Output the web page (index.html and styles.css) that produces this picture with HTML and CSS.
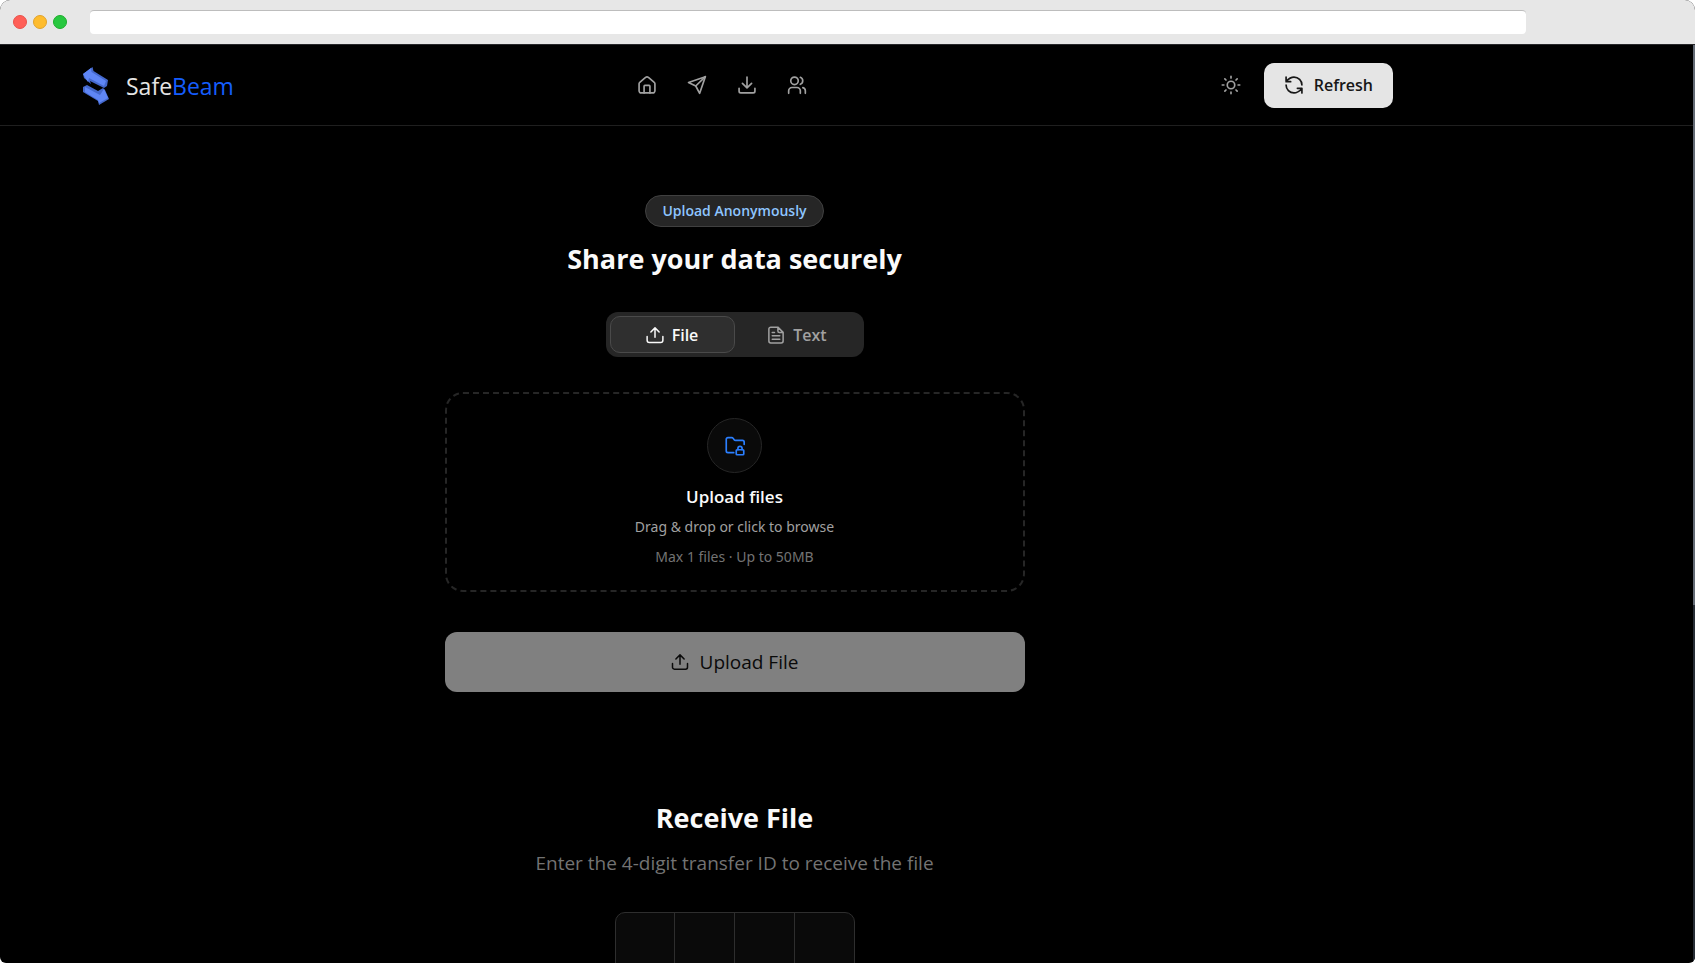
FILE: index.html
```html
<!DOCTYPE html>
<html lang="en">
<head>
<meta charset="utf-8">
<title>SafeBeam</title>
<link rel="stylesheet" href="styles.css">
</head>
<body>
<div class="window">
  <div class="chrome">
    <div class="lights"><span class="light red"></span><span class="light amber"></span><span class="light green"></span></div>
    <input class="address" type="text" aria-label="Address">
  </div>
  <div class="viewport">
    <div class="page">
      <header class="header">
        <div class="container header-row">
          <a class="brand" href="#">
            <svg class="logo" viewBox="0 0 40 46" aria-hidden="true">
              <path fill="#4468cc" d="M5 12 14.500 5 15.500 9 30 18 29 24 26 26 12 19 13 22 6 16z"/>
              <path fill="#5f86f5" d="M5 12 13 6 13.500 10 28 19 26 24 11 16 10 20z"/>
              <path fill="#4468cc" d="M5 25 9 23 20 29 25 26 27 28 31 37 21 43 20 39 5 30z"/>
              <path fill="#5f86f5" d="M7 25 22 33 26 27 30 36 21 41 20 38 7 30z"/>
            </svg>
            <span class="brand-name">Safe<span class="brand-accent">Beam</span></span>
          </a>
          <nav class="nav">
            <a href="#" aria-label="Home"><svg class="icon" viewBox="0 0 24 24"><path d="M2.500 10.500v8.500a2.500 2.500 0 0 0 2.500 2.500h14a2.500 2.500 0 0 0 2.500-2.500v-8.500a2 2 0 0 0-.8-1.600l-7-6a2.500 2.500 0 0 0-3.400 0l-7 6a2 2 0 0 0-.8 1.600z"/><path d="M8.500 21.500v-8a1 1 0 0 1 1-1h5a1 1 0 0 1 1 1v8"/></svg></a>
            <a href="#" aria-label="Send"><svg class="icon" viewBox="0 0 24 24"><path d="M22 2 1.800 9l8.700 4.200L15.200 22z"/><path d="M22 2 10.500 13.200"/></svg></a>
            <a href="#" aria-label="Receive"><svg class="icon" viewBox="0 0 24 24"><path d="M12 2.500v12.500M6.500 10l5.500 5.500 5.500-5.500M2.500 16v3.500a2 2 0 0 0 2 2h15a2 2 0 0 0 2-2V16"/></svg></a>
            <a href="#" aria-label="People"><svg class="icon" viewBox="0 0 24 24"><circle cx="9" cy="7" r="4.500"/><path d="M2 22v-3a4 4 0 0 1 4-4h6a4 4 0 0 1 4 4v3M16 2.800a4.500 4.500 0 0 1 0 8.400M22 22v-3a4 4 0 0 0-3-3.800"/></svg></a>
          </nav>
          <div class="actions">
            <button class="theme" type="button" aria-label="Toggle theme"><svg class="icon" viewBox="0 0 24 24"><circle cx="12" cy="12" r="4.500"/><path d="M12 1.500v2M12 20.500v2M1.500 12h2M20.500 12h2M4.600 4.600l1.400 1.400M18 18l1.400 1.400M4.600 19.400l1.400-1.400M18 6l1.400-1.400"/></svg></button>
            <button class="refresh" type="button"><svg class="icon" viewBox="0 0 24 24"><path d="M21.500 12A9.500 9.500 0 0 0 12 2.500c-3.500 0-6.500 2-9.500 5M2.500 2.500v5.500h5.500M2.500 12A9.500 9.500 0 0 0 12 21.500c3.500 0 6.500-2 9.500-5M16 16h5.500v5.500"/></svg>Refresh</button>
          </div>
        </div>
      </header>
      <main class="container main">
        <section class="share">
          <span class="badge">Upload Anonymously</span>
          <h1 class="title">Share your data securely</h1>
          <div class="tabs" role="tablist">
            <button class="tab active" type="button" role="tab" aria-selected="true"><svg class="icon" viewBox="0 0 24 24"><path d="M12 15V2.500M6.500 8 12 2.500 17.500 8M1.500 14v5a3 3 0 0 0 3 3h15a3 3 0 0 0 3-3v-5"/></svg>File</button>
            <button class="tab" type="button" role="tab" aria-selected="false"><svg class="icon" viewBox="0 0 24 24"><path d="M14.500 1.500H5a2.500 2.500 0 0 0-2.500 2.500v16A2.500 2.500 0 0 0 5 22.500h14a2.500 2.500 0 0 0 2.500-2.500V8.500zM14.500 1.500v5a2 2 0 0 0 2 2h5M7 8.500h3M7 13h10M7 17.500h10"/></svg>Text</button>
          </div>
          <button class="dropzone" type="button">
            <span class="drop-icon"><svg class="icon" viewBox="0 0 24 24"><path d="M10.500 20H3.500a2 2 0 0 1-2-2V4a2 2 0 0 1 2-2h4.600a2 2 0 0 1 1.600.8l1.300 1.600a2 2 0 0 0 1.600.8h8.400a2 2 0 0 1 2 2v3"/><rect x="13.500" y="16.500" width="9" height="6" rx="1"/><path d="M15.500 16.500V15a2.500 2.500 0 0 1 5 0v1.500"/></svg></span>
            <span class="drop-title">Upload files</span>
            <span class="drop-text">Drag &amp; drop or click to browse</span>
            <span class="drop-note">Max 1 files · Up to 50MB</span>
          </button>
          <button class="upload" type="button"><svg class="icon" viewBox="0 0 24 24"><path d="M12 15V2.500M6.500 8 12 2.500 17.500 8M2 14v5a2.500 2.500 0 0 0 2.500 2.500h15a2.500 2.500 0 0 0 2.500-2.500v-5"/></svg>Upload File</button>
        </section>
        <section class="receive">
          <h2 class="title">Receive File</h2>
          <p class="lead">Enter the 4-digit transfer ID to receive the file</p>
          <div class="otp">
            <input type="text" maxlength="1" aria-label="Digit 1"><input type="text" maxlength="1" aria-label="Digit 2"><input type="text" maxlength="1" aria-label="Digit 3"><input type="text" maxlength="1" aria-label="Digit 4">
          </div>
        </section>
      </main>
    </div>
    <div class="scrollbar"><div class="thumb"></div></div>
  </div>
</div>
</body>
</html>
```
FILE: styles.css
```css
* { box-sizing: border-box; }
body { margin: 0; background: #fff; font-family: "Open Sans", "Noto Sans", sans-serif; color: #fafafa; }
button, input { font: inherit; color: inherit; margin: 0; }
button { cursor: pointer; border: 0; }
a { color: inherit; text-decoration: none; }
.window { display: flex; flex-direction: column; height: 100vh; overflow: hidden; border-radius: 10px 10px 6px 6px; background: #000; }
.chrome { flex: none; display: flex; align-items: center; gap: 23px; height: 45px; padding: 0 169px 0 13px; background: #e7e7e7; border-bottom: 1px solid #27272a; }
.lights { display: flex; gap: 6px; }
.light { width: 14px; height: 14px; border-radius: 50%; border: 1px solid; }
.red { background: #ff5f57; border-color: #e9524a; }
.amber { background: #febc2e; border-color: #e1a32b; }
.green { background: #28c840; border-color: #1dad2b; }
.address { flex: 1; height: 24px; padding: 0 8px; color: #222; background: #fff; border: 0; border-top: 1px solid #bdbdbd; border-radius: 4px; }
.viewport { flex: 1; min-height: 0; display: flex; }
.page { flex: 1; overflow: hidden; }
.scrollbar { flex: none; width: 2px; background: #272d35; }
.thumb { height: 61%; background: #646b75; }
.container { max-width: 1469px; }
.icon { flex: none; width: 20px; height: 20px; fill: none; stroke: currentColor; stroke-width: 2; stroke-linecap: round; stroke-linejoin: round; }
.header { border-bottom: 1px solid #1f1f1f; }
.header-row { display: flex; justify-content: space-between; align-items: center; height: 80px; padding: 0 76px 0 78px; }
.brand { display: flex; align-items: center; gap: 8px; }
.logo { width: 40px; height: 46px; }
.brand-name { padding-top: 2px; font-size: 23px; line-height: 32px; color: #e5e5e5; }
.brand-accent { color: #155dfc; }
.nav { display: flex; gap: 30px; color: #a1a1a1; }
.nav a { display: flex; }
.actions { display: flex; align-items: center; gap: 13px; }
.theme { display: flex; padding: 10px; background: none; color: #a1a1a1; }
.refresh { display: flex; align-items: center; gap: 10px; height: 45px; padding: 0 20px; border-radius: 10px; background: #e5e5e5; color: #171717; font-size: 16px; font-weight: 600; }
.main { display: flex; flex-direction: column; gap: 108px; padding: 69px 24px 0; }
.share, .receive { display: flex; flex-direction: column; align-items: center; }
.badge { height: 32px; padding: 0 16px; border: 1px solid #404040; border-radius: 16px; background: #262626; color: #8ec5ff; font-size: 14px; font-weight: 600; line-height: 30px; }
.title { margin: 0; font-size: 27px; font-weight: 700; line-height: 36px; }
.share .title { margin-top: 14px; }
.tabs { display: flex; margin-top: 35px; padding: 4px; border-radius: 12px; background: #262626; }
.tab { display: flex; align-items: center; justify-content: center; gap: 8px; width: 125px; height: 37px; border: 1px solid transparent; border-radius: 10px; background: none; color: #a1a1a1; font-size: 16px; font-weight: 600; }
.tab.active { background: #2f2f2f; border-color: #4a4a4a; color: #fafafa; }
.tab .icon, .upload .icon { width: 18px; height: 18px; }
.dropzone { display: flex; flex-direction: column; align-items: center; justify-content: flex-start; width: 100%; max-width: 580px; height: 200px; margin-top: 35px; padding: 24px 24px 16px; border: 2px dashed #262626; border-radius: 18px; background: none; }
.drop-icon { flex: none; display: flex; align-items: center; justify-content: center; width: 55px; height: 55px; border: 1px solid #262626; border-radius: 50%; background: #0a0a0a; color: #2b7fff; }
.drop-title { margin-top: 9px; font-size: 17px; font-weight: 600; line-height: 30px; }
.drop-text, .drop-note { font-family: "Noto Sans", sans-serif; font-size: 14px; line-height: 30px; color: #a1a1a1; }
.drop-note { color: #737373; }
.upload { display: flex; align-items: center; justify-content: center; gap: 11px; width: 100%; max-width: 580px; height: 60px; margin-top: 40px; border-radius: 12px; background: #808080; color: #0a0a0a; font-size: 19px; }
.lead { margin: 13px 0 0; color: #737373; font-size: 19px; line-height: 28px; }
.otp { display: flex; margin-top: 35px; border: 1px solid #2e2e2e; border-radius: 10px; background: #0a0a0a; }
.otp input { width: 60px; height: 60px; padding: 0; border: 0; border-left: 1px solid #2e2e2e; background: none; text-align: center; }
.otp input:first-child { width: 58px; border-left: 0; }
```
